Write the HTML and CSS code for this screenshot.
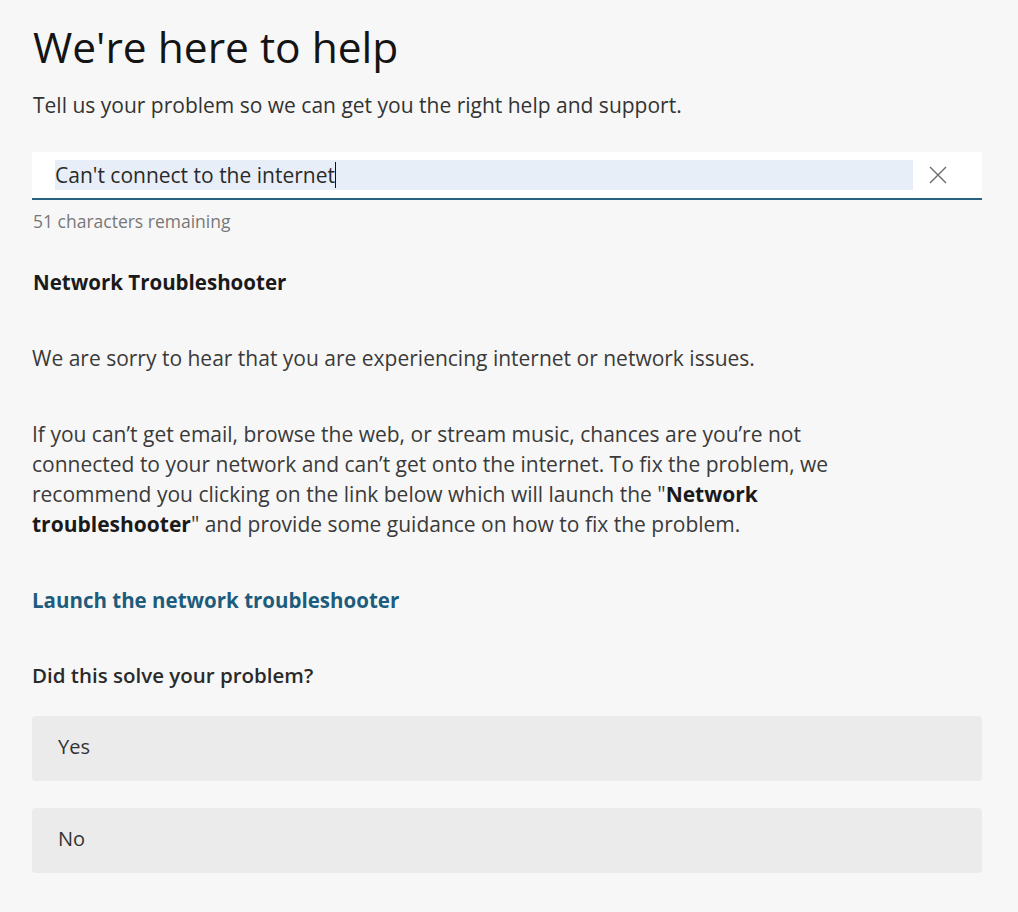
FILE: index.html
```html
<!DOCTYPE html>
<html lang="en">
<head>
<meta charset="utf-8">
<title>We're here to help</title>
<link rel="stylesheet" href="styles.css">
</head>
<body>
<main class="page">
  <h1 class="title">We're here to help</h1>
  <p class="intro">Tell us your problem so we can get you the right help and support.</p>
  <div class="search">
    <div class="search-field"><span class="search-text">Can't connect to the internet</span><span class="caret"></span></div>
    <button class="clear" aria-label="Clear">
      <svg width="18" height="18" viewBox="0 0 18 18"><path d="M1 1 L17 17 M17 1 L1 17" stroke="#6b6b6b" stroke-width="1.4" fill="none"/></svg>
    </button>
  </div>
  <p class="remaining">51 characters remaining</p>
  <h2 class="section-title">Network Troubleshooter</h2>
  <p class="para first">We are sorry to hear that you are experiencing internet or network issues.</p>
  <p class="para">If you can’t get email, browse the web, or stream music, chances are you’re not connected to your network and can’t get onto the internet. To fix the problem, we recommend you clicking on the link below which will launch the "<b>Network troubleshooter</b>" and provide some guidance on how to fix the problem.</p>
  <a class="link" href="#">Launch the network troubleshooter</a>
  <p class="question">Did this solve your problem?</p>
  <div class="answers">
    <button class="answer">Yes</button>
    <button class="answer">No</button>
  </div>
</main>
</body>
</html>
```
FILE: styles.css
```css
html, body {
  margin: 0;
  padding: 0;
  background: #f7f7f7;
}
body {
  font-family: "Open Sans", "Noto Sans", sans-serif;
  color: #333;
}
.page {
  width: 950px;
  padding: 20px 0 0 32px;
}
.title {
  margin: 0 0 0 1px;
  font-size: 42.5px;
  font-weight: 400;
  color: #141414;
  line-height: 54px;
}
.intro {
  margin: 18px 0 0 1px;
  font-size: 21px;
  line-height: 26px;
  color: #333;
}
.search {
  margin-top: 34px;
  height: 46px;
  background: #fff;
  border-bottom: 2px solid #2a6080;
  display: flex;
  align-items: center;
  padding-left: 23px;
}
.search-field {
  flex: 1;
  height: 30px;
  background: #e8eef8;
  display: flex;
  align-items: center;
  font-size: 21px;
  color: #2a2a2a;
}
.caret {
  width: 1px;
  height: 26px;
  background: #111;
}
.clear {
  width: 69px;
  height: 46px;
  border: 0;
  background: transparent;
  display: flex;
  align-items: center;
  justify-content: flex-start;
  padding: 0 0 0 16px;
}
.remaining {
  margin: 10px 0 0 1px;
  font-size: 17.5px;
  color: #777;
  line-height: 22px;
}
.section-title {
  margin: 37px 0 0 1px;
  font-size: 20.5px;
  font-weight: 700;
  color: #1a1a1a;
  line-height: 26px;
}
.para {
  margin: 0;
  font-size: 21px;
  line-height: 30px;
  color: #3a3a3a;
  max-width: 840px;
}
.para.first {
  margin-top: 48px;
}
.para + .para {
  margin-top: 46px;
}
.para b {
  color: #1a1a1a;
}
.link {
  display: block;
  margin-top: 48px;
  font-size: 20.5px;
  font-weight: 700;
  color: #1d5c7c;
  text-decoration: none;
  line-height: 26px;
}
.question {
  margin: 49px 0 0 0;
  font-size: 20.5px;
  font-weight: 600;
  color: #2a2a2a;
  line-height: 26px;
}
.answers {
  margin-top: 28px;
  display: flex;
  flex-direction: column;
  gap: 27px;
}
.answer {
  height: 65px;
  border: 0;
  border-radius: 4px;
  background: #ebebeb;
  text-align: left;
  padding: 0 0 5px 26px;
  font-family: inherit;
  font-size: 20px;
  color: #333;
}
```
